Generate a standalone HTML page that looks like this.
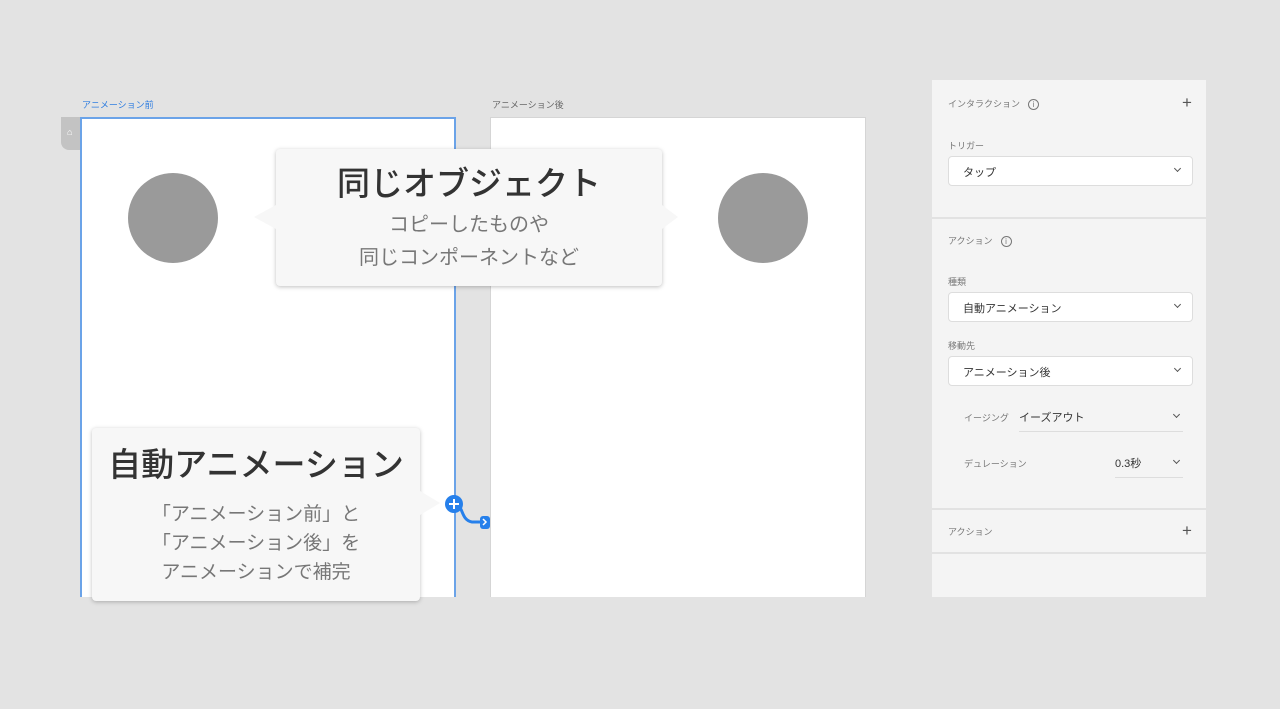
<!DOCTYPE html><html><head><meta charset="utf-8"><style>
*{margin:0;padding:0;box-sizing:border-box}
body{width:1280px;height:709px;background:#e3e3e3;position:relative;overflow:hidden;font-family:"Liberation Sans","Noto Sans CJK JP",sans-serif}
.a{position:absolute}
.board{background:#fff}
.circ{width:90px;height:90px;border-radius:50%;background:#9a9a9a}
.call{background:#f7f7f7;border-radius:4px;box-shadow:0 1px 4px rgba(0,0,0,.25);text-align:center}
.lbl{font-size:9px;color:#777}
.sel{position:absolute;left:16px;width:245px;height:30px;background:#fff;border:1px solid #ddd;border-radius:4px;font-size:11px;color:#333;padding:7px 14px}
.chev{position:absolute;right:12px;top:9px;width:5px;height:5px;border-right:1.5px solid #555;border-bottom:1.5px solid #555;transform:rotate(45deg)}
.info{display:inline-block;width:11px;height:11px;border:1px solid #777;border-radius:50%;font-size:8px;line-height:9px;text-align:center;vertical-align:middle;margin-left:8px;color:#777}
</style></head><body>
<div class="a" style="left:82px;top:98px;font-size:9px;color:#2f7de0">アニメーション前</div>
<div class="a" style="left:492px;top:98px;font-size:9px;color:#666">アニメーション後</div>
<div class="a" style="left:61px;top:117px;width:22px;height:33px;background:#c3c3c3;border-radius:0 0 0 8px"></div>
<div class="a" style="left:67px;top:127px;color:#fff;font-size:9px">⌂</div>
<div class="a board" style="left:80px;top:117px;width:376px;height:480px"></div>
<div class="a" style="left:80px;top:117px;width:376px;height:2px;background:#6ba3e8"></div>
<div class="a" style="left:80px;top:117px;width:2px;height:480px;background:#6ba3e8"></div>
<div class="a" style="left:454px;top:117px;width:2px;height:480px;background:#6ba3e8"></div>
<div class="a board" style="left:490px;top:117px;width:376px;height:480px;border:1px solid #d5d5d5;border-bottom:none"></div>
<div class="a circ" style="left:128px;top:173px"></div>
<div class="a circ" style="left:718px;top:173px"></div>
<svg class="a" style="left:440px;top:490px" width="60" height="45"><path d="M14 14 C24 14 20 30 32 32 L44 32" stroke="#2680eb" stroke-width="3" fill="none"/><circle cx="14" cy="14" r="9" fill="#2680eb"/><path d="M9 14h10M14 9v10" stroke="#fff" stroke-width="2"/><rect x="40" y="26" width="10" height="13" rx="3" fill="#2680eb"/><path d="M43 29l3 3-3 3" stroke="#fff" stroke-width="1.5" fill="none"/></svg>
<div class="a call" style="left:276px;top:149px;width:386px;height:137px">
<div style="font-size:33px;font-weight:500;color:#333;margin-top:14px;line-height:42px">同じオブジェクト</div>
<div style="font-size:20px;color:#777;line-height:33px;margin-top:4px">コピーしたものや<br>同じコンポーネントなど</div></div>
<div class="a" style="left:254px;top:205px;width:0;height:0;border:12px solid transparent;border-right:22px solid #f7f7f7;border-left:none"></div>
<div class="a" style="left:662px;top:205px;width:0;height:0;border:12px solid transparent;border-left:16px solid #f7f7f7;border-right:none"></div>
<div class="a call" style="left:92px;top:428px;width:328px;height:173px">
<div style="font-size:33px;font-weight:500;color:#333;margin-top:16px;line-height:42px">自動アニメーション</div>
<div style="font-size:19px;color:#777;line-height:29px;margin-top:14px">「アニメーション前」と<br>「アニメーション後」を<br>アニメーションで補完</div></div>
<div class="a" style="left:420px;top:491px;width:0;height:0;border:12px solid transparent;border-left:20px solid #f7f7f7;border-right:none"></div>
<div class="a" style="left:932px;top:80px;width:274px;height:517px;background:#f4f4f4">
<div class="a" style="left:0;top:137px;width:274px;height:2px;background:#e2e2e2"></div>
<div class="a" style="left:0;top:428px;width:274px;height:2px;background:#e2e2e2"></div>
<div class="a" style="left:0;top:472px;width:274px;height:2px;background:#e2e2e2"></div>
<div class="a lbl" style="left:16px;top:17px">インタラクション<span class="info">i</span></div>
<div class="a" style="left:250px;top:13px;font-size:17px;color:#555">+</div>
<div class="a lbl" style="left:16px;top:59px">トリガー</div>
<div class="sel" style="top:76px">タップ<span class="chev"></span></div>
<div class="a lbl" style="left:16px;top:154px">アクション<span class="info">i</span></div>
<div class="a lbl" style="left:16px;top:195px">種類</div>
<div class="sel" style="top:212px">自動アニメーション<span class="chev"></span></div>
<div class="a lbl" style="left:16px;top:259px">移動先</div>
<div class="sel" style="top:276px">アニメーション後<span class="chev"></span></div>
<div class="a lbl" style="left:32px;top:331px">イージング</div>
<div class="a" style="left:87px;top:329px;width:164px;height:23px;border-bottom:1px solid #ddd;font-size:11px;color:#333">イーズアウト<span class="chev" style="right:4px;top:3px"></span></div>
<div class="a lbl" style="left:32px;top:377px">デュレーション</div>
<div class="a" style="left:183px;top:375px;width:68px;height:23px;border-bottom:1px solid #ddd;font-size:11px;color:#333">0.3秒<span class="chev" style="right:4px;top:3px"></span></div>
<div class="a lbl" style="left:16px;top:445px">アクション</div>
<div class="a" style="left:250px;top:441px;font-size:17px;color:#555">+</div>
</div>
</body></html>
